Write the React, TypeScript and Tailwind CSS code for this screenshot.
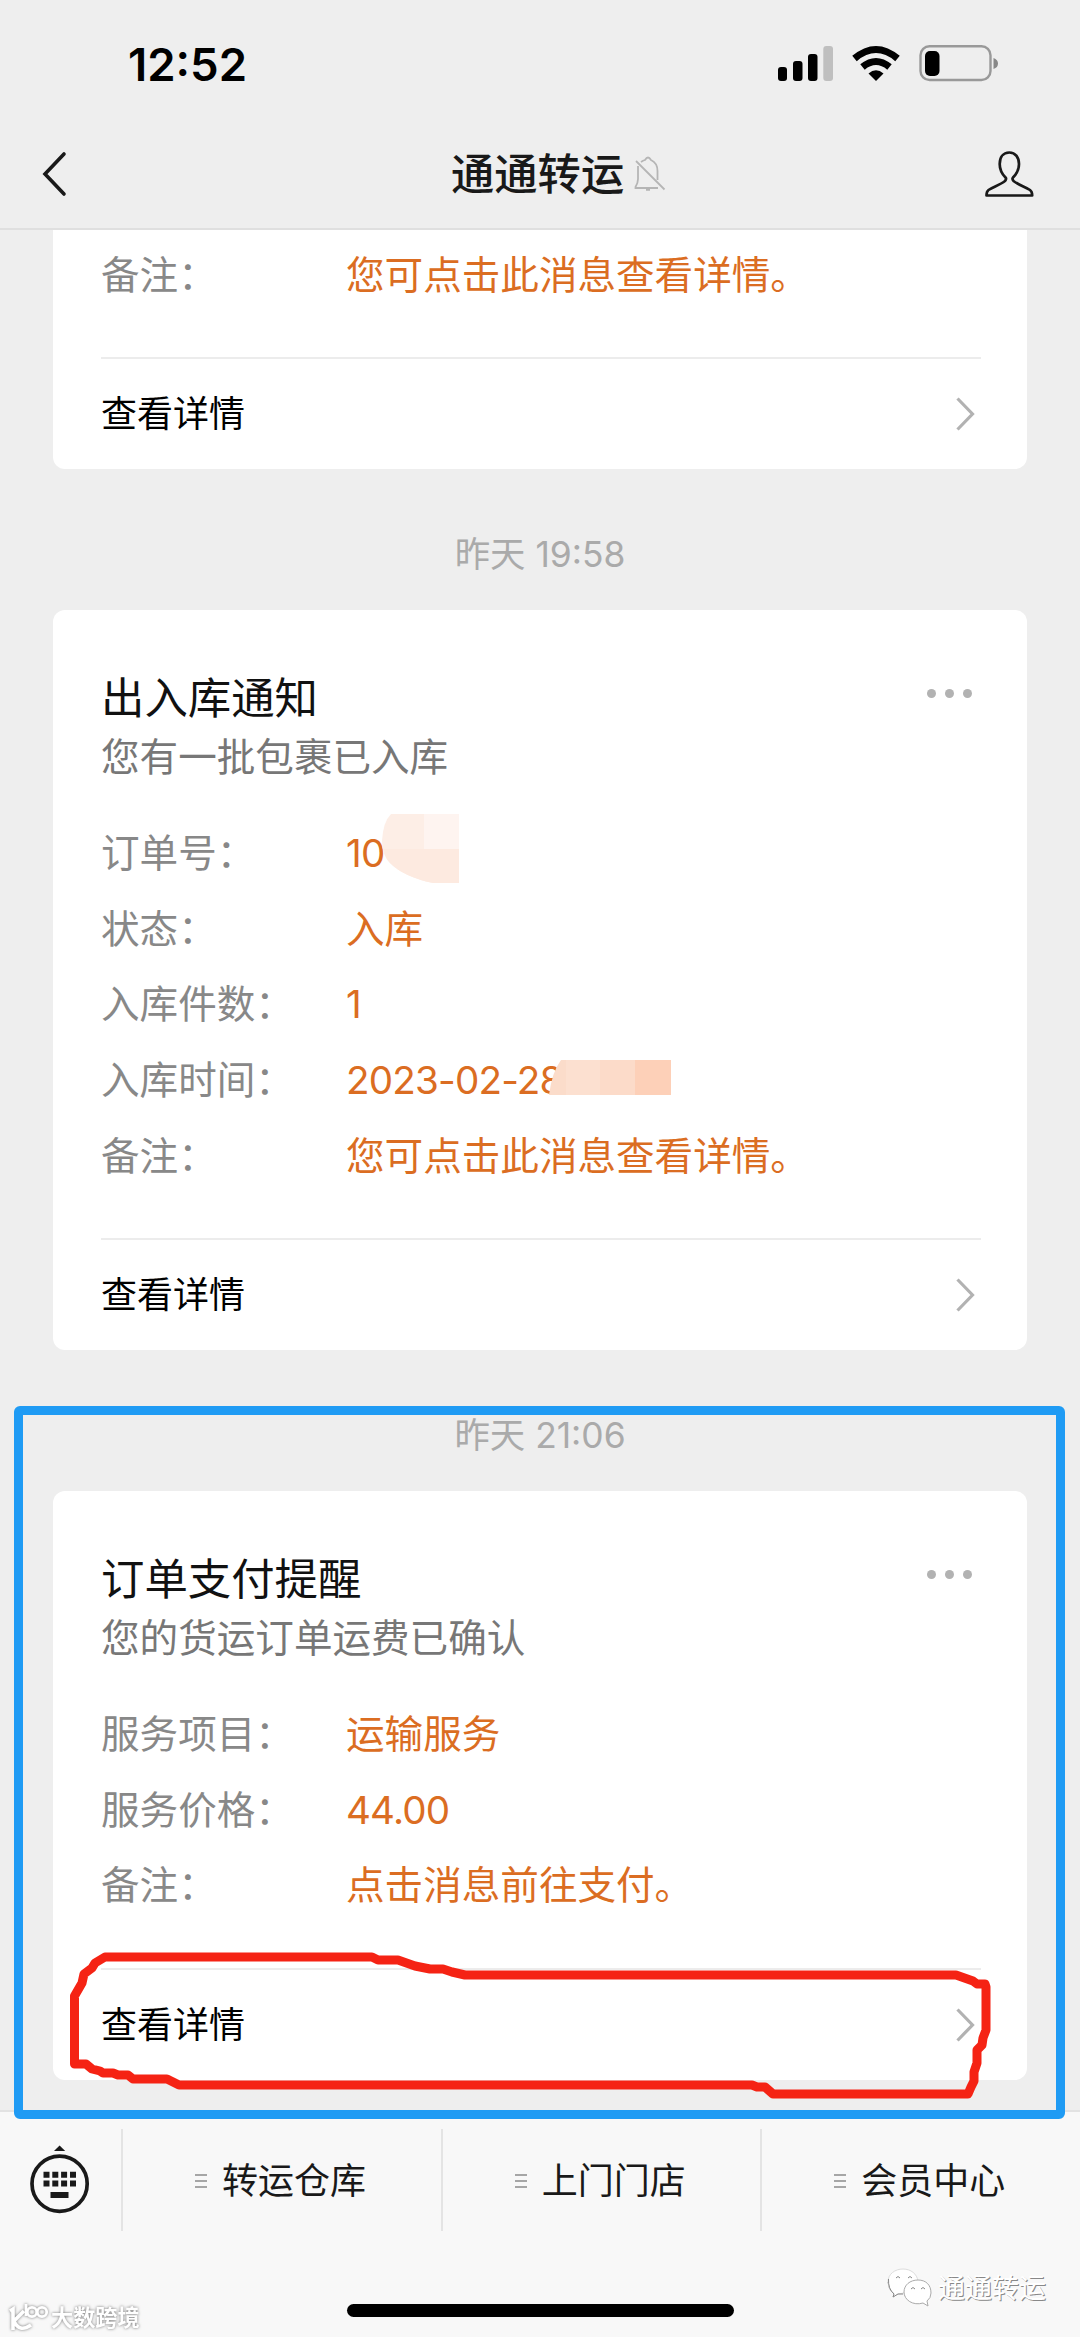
import type { ReactNode } from 'react'

type Row = { label: string; value: string; mask?: ReactNode }

const firstRows: Row[] = [{ label: '备注：', value: '您可点击此消息查看详情。' }]

const stockRows: Row[] = [
  { label: '订单号：', value: '10', mask: <OrderMask /> },
  { label: '状态：', value: '入库' },
  { label: '入库件数：', value: '1' },
  { label: '入库时间：', value: '2023-02-28', mask: <TimeMask /> },
  { label: '备注：', value: '您可点击此消息查看详情。' },
]

const payRows: Row[] = [
  { label: '服务项目：', value: '运输服务' },
  { label: '服务价格：', value: '44.00' },
  { label: '备注：', value: '点击消息前往支付。' },
]

const menus = ['转运仓库', '上门门店', '会员中心']

function OrderMask() {
  return (
    <svg className="absolute left-[36px] top-[-2px]" width="78" height="72" viewBox="0 0 78 72">
      <path d="M9 1H77V70H51Q22 64 8 50Q0 42 0 28Q1 9 9 1Z" fill="#fdeee6" />
      <path d="M42 1H77V36H42Z" fill="#fef4f0" />
      <path d="M2 36H77V70H51Q22 64 8 50Q3 45 2 36Z" fill="#fdeae0" />
    </svg>
  )
}

function TimeMask() {
  return (
    <svg className="absolute left-[203px] top-[18px]" width="122" height="36" viewBox="0 0 122 36">
      <path d="M0 35Q3 12 12 0H122V35Z" fill="#fbdcca" />
      <path d="M17 0H51V35H17Z" fill="#fce0d0" />
      <path d="M51 0H86V35H51Z" fill="#fcdbc9" />
      <path d="M86 0H122V35H86Z" fill="#fdd0b8" />
    </svg>
  )
}

function StatusBar() {
  return (
    <div className="flex h-[129px] items-start justify-between pl-[128px] pr-[81px]">
      <span className="mt-[37px] text-[45.5px] font-semibold leading-[55px] text-black">12:52</span>
      <svg className="mt-[44px]" width="222" height="38" viewBox="777 44 222 38">
        <rect x="778" y="67" width="9" height="14" rx="3" />
        <rect x="793" y="61" width="9.5" height="20" rx="3" />
        <rect x="808" y="54" width="9.5" height="27" rx="3" />
        <rect x="823.3" y="46" width="9.7" height="35" rx="3" fill="#bfbfbf" />
        <path d="M854.5 58.5Q876 40.5 897.5 58.5" fill="none" stroke="#000" strokeWidth="7" />
        <path d="M862.5 67Q876 56 889.5 67" fill="none" stroke="#000" strokeWidth="7" />
        <path d="M868.5 73.5Q876 67 883.5 73.5L876 81Z" />
        <rect x="920.5" y="46.2" width="70" height="33.8" rx="9" fill="none" stroke="#999" strokeWidth="2.4" />
        <rect x="925" y="51" width="14.5" height="25" rx="5" />
        <path d="M993.5 58Q998 59.5 998 63.5T993.5 69Z" fill="#888" />
      </svg>
    </div>
  )
}

function NavBar() {
  return (
    <div className="flex h-[101px] items-start border-b-2 border-[#dfdfdf] pl-[42px] pr-[45px]">
      <svg className="mt-[22px]" width="26" height="46" viewBox="0 0 26 46" fill="none" stroke="#191919" strokeWidth="3.6">
        <path d="M22 3L3 23L22 43" strokeLinecap="round" />
      </svg>
      <div className="flex flex-1 items-start pl-[383px]">
        <h1 className="mt-[17px] text-[43.3px] font-medium leading-[56px] text-[#191919]">通通转运</h1>
        <svg className="ml-[10px] mt-[27px]" width="32" height="36" viewBox="634 156 32 36" fill="none" stroke="#b5b5b5" strokeWidth="1.8">
          <path d="M638 166V179Q638 183 635.5 187V188H658M641 162Q643 160.5 645 160Q648 155 651 160Q657.5 163 657.5 171V180" />
          <path d="M636 161L664.5 189.5" />
          <path d="M646 189.5H650" strokeWidth="2.5" />
        </svg>
      </div>
      <svg className="mt-[21px]" width="51" height="49" viewBox="984 150 51 49" fill="none" stroke="#191919" strokeWidth="2.7">
        <path d="M1009.3 152.5C1003 152.5 999.7 157.5 999.7 164C999.7 171 1002.5 174.5 1005.5 177.5Q1006.8 179 1005 181C1000 185 993 187 988.5 190Q986.5 191.5 986.5 195.5H1032.2Q1032.2 191.5 1030 190C1025.5 187 1018.5 185 1013.5 181Q1011.8 179 1013 177.5C1016 174.5 1019 171 1019 164C1019 157.5 1015.6 152.5 1009.3 152.5Z" strokeLinejoin="round" />
      </svg>
    </div>
  )
}

function Rows({ rows }: { rows: Row[] }) {
  return (
    <div>
      {rows.map((row) => (
        <div key={row.label} className="flex h-[75.7px] items-center text-[38.6px]">
          <span className="w-[245px] whitespace-nowrap text-[#888]">{row.label}</span>
          <span
            className={
              /^\d/.test(row.value)
                ? 'relative flex h-full items-center whitespace-nowrap tracking-[-0.8px] text-[#db6d22]'
                : 'relative flex h-full items-center whitespace-nowrap text-[#db6d22]'
            }
          >
            {row.value}
            {row.mask}
          </span>
        </div>
      ))}
    </div>
  )
}

function DetailLink() {
  return (
    <div className="-mr-[2px] flex h-[111px] items-center justify-between border-t-2 border-[#ececec] pr-[5px]">
      <span className="text-[36px] text-black">查看详情</span>
      <svg width="20" height="34" viewBox="0 0 20 34" fill="none" stroke="#b2b2b2" strokeWidth="3.2">
        <path d="M1.5 1.5L16.500 17L1.5 32.5" />
      </svg>
    </div>
  )
}

function CardHead({ title, text }: { title: string; text: string }) {
  return (
    <div className="flex h-[175px] justify-between pr-[7px] pt-[57px]">
      <div>
        <h2 className="text-[43.4px] leading-[62px] text-[#111]">{title}</h2>
        <p className="text-[38.6px] leading-[56px] text-[#777]">{text}</p>
      </div>
      <div className="flex gap-[9px] pt-[22px]">
        <i className="size-[9px] rounded-full bg-[#b2b2b2]" />
        <i className="size-[9px] rounded-full bg-[#b2b2b2]" />
        <i className="size-[9px] rounded-full bg-[#b2b2b2]" />
      </div>
    </div>
  )
}

function Annotations() {
  return (
    <>
      <div className="absolute left-[14px] top-[1406px] h-[713px] w-[1051px] rounded-[6px] border-[9px] border-[#1f9bf4]" />
      <svg className="absolute left-0 top-[1930px]" width="1080" height="190" viewBox="0 1930 1080 190" fill="none" stroke="#f52314" strokeWidth="9" strokeLinejoin="round">
        <path d="M105 1957H372L378 1960H398L415 1966L430 1969H443L452 1972L465 1975H956L973 1981L977 1984L985 1984L986 1987V2030L983 2038L982 2045L977 2050V2063L974 2072V2081L971 2087L968 2094H773L765 2087H757L752 2085H179L167 2079H133L128 2075H118L113 2073H103L100 2071L92 2069L86 2064H74.500V1996L82 1983L84 1974L92 1968L95 1963Z" />
      </svg>
    </>
  )
}

function BottomBar() {
  return (
    <div className="h-[227px] border-t-2 border-[#e2e2e2] bg-[#f8f8f8]">
      <div className="flex items-start pt-[17px]">
        <div className="flex h-[102px] w-[121px] justify-center pt-[15px]">
          <svg width="62" height="72" viewBox="30 2144 62 72">
            <circle cx="60.6" cy="2183.7" r="27.6" fill="none" stroke="#191919" strokeWidth="3.7" />
            <path d="M55 2151L60.6 2145.5L66.2 2151Z" fill="#191919" />
            <path d="M44.5 2171.7h6v6h-6zM53.3 2171.7h6v6h-6zM62.1 2171.7h6v6h-6zM71 2171.7h6v6h-6zM44.5 2180.5h6v6h-6zM53.3 2180.5h6v6h-6zM62.1 2180.5h6v6h-6zM71 2180.5h6v6h-6zM51.5 2192h18v6h-18z" fill="#191919" />
          </svg>
        </div>
        {menus.map((name) => (
          <div key={name} className="flex h-[102px] w-[319.8px] items-center border-l-2 border-[#e4e4e4] pl-[72px] pt-[2px]">
            <svg width="12" height="14" viewBox="0 0 12 14" stroke="#8a8a8a" strokeWidth="1.6">
              <path d="M0 1H12M0 7H12M0 13H12" />
            </svg>
            <span className="ml-[15px] whitespace-nowrap text-[36px] text-[#191919]">{name}</span>
          </div>
        ))}
      </div>
    </div>
  )
}

function Watermarks() {
  return (
    <>
      <div className="absolute left-[347px] top-[2304px] h-[13px] w-[387px] rounded-full bg-black" />
      <div className="absolute left-[8px] top-[2299px] flex items-center drop-shadow-[0_0_1.5px_#777]">
        <svg width="42" height="34" viewBox="0 0 42 34" fill="none" stroke="#fff" strokeWidth="2.8">
          <path d="M2 10L5 8V29M16 10L6 20Q11 32 23 24" strokeWidth="3.6" />
          <path d="M18 3V15" />
          <circle cx="24" cy="11" r="4.7" />
          <circle cx="34" cy="11" r="4.7" />
        </svg>
        <span className="ml-[1px] text-[22.2px] font-bold leading-[38px] text-white">大数跨境</span>
      </div>
      <div className="absolute left-[887px] top-[2267px] flex items-start">
        <svg width="46" height="41" viewBox="0 0 46 41" fill="#fff" stroke="#aaa" strokeWidth="1">
          <path d="M7 27Q1 22 1 15" stroke="#888" />
          <path d="M7 27Q1 22 1 15C1 7 8 2 16 2S30 7 31 14Q19 15 17 26L11 27L6 30Z" stroke="#ddd" />
          <path d="M17 25C17 18 23 13 31 13S44 18 44 26Q44 31 40 34L41 39L36 36C26 39 17 33 17 25Z" />
          <path d="M1.500 12Q1 22 7 27L6 30L11 27H16M9 11Q11 8 13 11M21 11Q23 8 25 11M24 22Q26 19 28 22M34 22Q36 19 38 22" fill="none" stroke="#888" />
        </svg>
        <span className="ml-[5px] mt-[4px] text-[27px] leading-[36px] text-white [text-shadow:1px_1px_0_#888]">
          通通转运
        </span>
      </div>
    </>
  )
}

export default function App() {
  return (
    <main className="relative h-[2337px] w-[1080px] overflow-hidden bg-[#eee] font-['Inter','Noto_Sans_CJK_SC',sans-serif] leading-[56px]">
      <StatusBar />
      <NavBar />
      <div className="h-[1880px] px-[53px]">
        <section className="h-[239px] rounded-b-[12px] bg-white px-[48px]">
          <div className="h-[127px] pt-[7px]">
            <Rows rows={firstRows} />
          </div>
          <DetailLink />
        </section>
        <p className="h-[141px] pt-[58px] text-center text-[35.4px] text-[#aaa]">昨天 19:58</p>
        <section className="h-[740px] rounded-[12px] bg-white px-[48px]">
          <CardHead title="出入库通知" text="您有一批包裹已入库" />
          <div className="h-[453px] pt-[30px]">
            <Rows rows={stockRows} />
          </div>
          <DetailLink />
        </section>
        <p className="h-[141px] pt-[58px] text-center text-[35.4px] text-[#aaa]">昨天 21:06</p>
        <section className="h-[589px] rounded-[12px] bg-white px-[48px]">
          <CardHead title="订单支付提醒" text="您的货运订单运费已确认" />
          <div className="h-[302px] pt-[30px]">
            <Rows rows={payRows} />
          </div>
          <DetailLink />
        </section>
      </div>
      <BottomBar />
      <Annotations />
      <Watermarks />
    </main>
  )
}
